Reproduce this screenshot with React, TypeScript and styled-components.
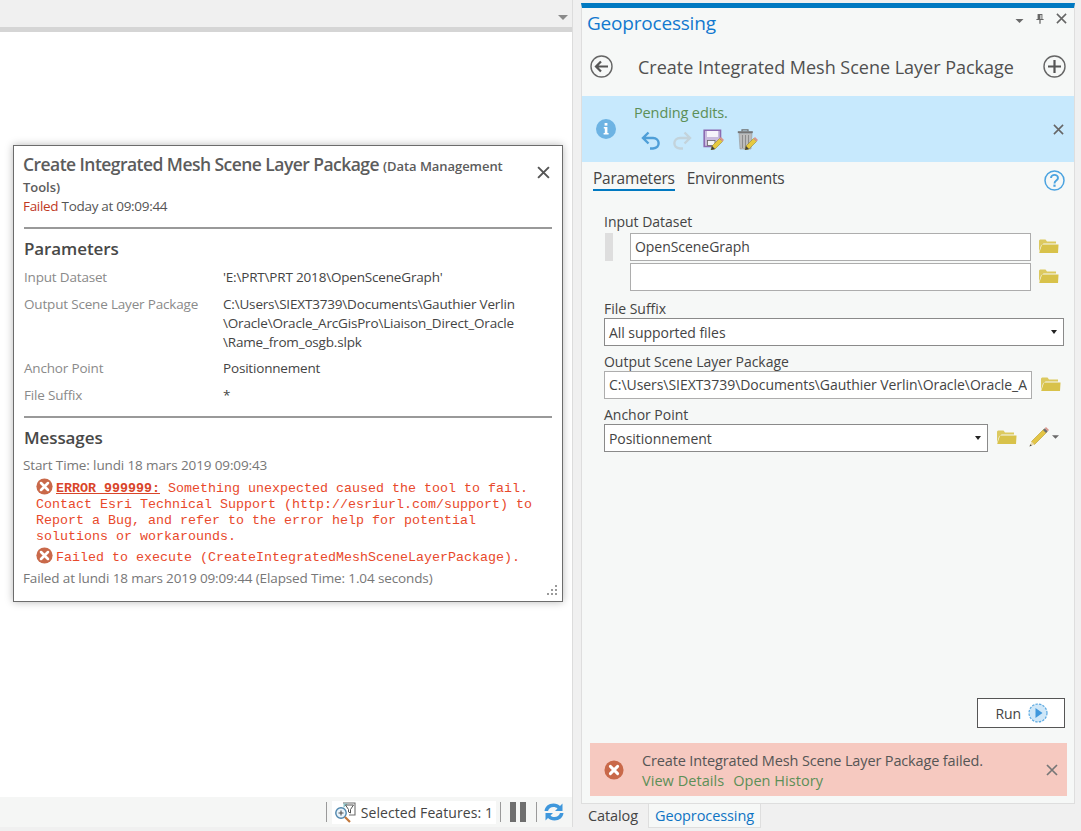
import * as React from 'react';
import styled, { createGlobalStyle } from 'styled-components';

const GlobalStyle = createGlobalStyle`
  html, body {
    margin: 0;
    padding: 0;
    background: #f0f0f0;
    overflow: hidden;
  }
  * {
    box-sizing: border-box;
  }
  body {
    font-family: "Open Sans", "Noto Sans", sans-serif;
    font-size: 13.5px;
    color: #444;
  }
`;

const Page = styled.div`
  display: flex;
  width: 1081px;
  height: 831px;
  background: #f0f0f0;
`;

/* left side: map view with the floating message window */
const MapColumn = styled.div`
  display: flex;
  flex-direction: column;
  width: 573px;
  height: 827px;
  border-right: 1px solid #dcdcdc;
`;

const MapTopBand = styled.div`
  display: flex;
  justify-content: flex-end;
  align-items: center;
  height: 27px;
  padding: 7px 4px 0 0;
`;

const MapView = styled.div`
  flex: 1;
  background: #fff;
  border-top: 5px solid #d5d5d5;
  padding: 113px 0 0 13px;
`;

const StatusBar = styled.div`
  display: flex;
  justify-content: flex-end;
  align-items: center;
  height: 30px;
  padding-right: 8px;
  background: #f5f6f5;
`;

const StatusSeparator = styled.div<{ $left: number; $right: number }>`
  width: 1px;
  height: 20px;
  background: #9a9a9a;
  margin: 0 ${(p) => p.$right}px 0 ${(p) => p.$left}px;
`;

const StatusChip = styled.div`
  display: flex;
  align-items: center;
  gap: 5px;
  height: 23px;
  padding: 0 3px;
  background: #fff;
  font-size: 14px;
  letter-spacing: 0.08px;
  color: #444;
`;

const PauseBar = styled.div`
  width: 6px;
  height: 20px;
  background: #6e6e6e;
  margin-right: 4px;
`;

const MessageWindow = styled.div`
  position: relative;
  width: 550px;
  height: 457px;
  padding: 8px 10px 0 9px;
  background: #fff;
  border: 1.5px solid #6c6c6c;
  box-shadow: 0 0 8px rgba(0, 0, 0, 0.28);
`;

const WindowClose = styled.div`
  position: absolute;
  top: 20px;
  right: 12px;
  display: flex;
`;

const ToolTitle = styled.div`
  width: 500px;
  font-size: 17.5px;
  font-weight: 600;
  line-height: 21px;
  letter-spacing: -0.55px;
  color: #5c5c5c;
`;

const ToolBox = styled.span`
  font-size: 13px;
  line-height: 1;
  letter-spacing: -0.05px;
`;

const StatusLine = styled.div`
  margin-top: 1px;
  font-size: 13.5px;
  line-height: 18px;
  letter-spacing: -0.3px;
  color: #555;
`;

const FailedWord = styled.span`
  color: #c0391f;
`;

const Rule = styled.div<{ $top: number }>`
  height: 2px;
  margin: ${(p) => p.$top}px 0 0 1px;
  background: #999;
`;

const SectionTitle = styled.div`
  margin: 9px 0 0 1px;
  font-size: 17px;
  font-weight: 600;
  line-height: 22px;
  letter-spacing: -0.1px;
  color: #484848;
`;

const ParamGrid = styled.div`
  display: grid;
  grid-template-columns: 199px 1fr;
  row-gap: 7.5px;
  margin: 8px 0 0 1px;
  font-size: 13.5px;
  line-height: 19px;
  letter-spacing: -0.18px;
`;

const ParamName = styled.div`
  color: #8a8a8a;
`;

const ParamValue = styled.div`
  color: #444;
`;

const LogLine = styled.div<{ $top?: number }>`
  margin-top: ${(p) => p.$top ?? 0}px;
  font-size: 13.5px;
  line-height: 18px;
  letter-spacing: -0.12px;
  color: #777;
`;

const ErrorBlock = styled.div<{ $top: number }>`
  margin: ${(p) => p.$top}px 0 0 13px;
  font-family: "Liberation Mono", "DejaVu Sans Mono", monospace;
  font-size: 13.33px;
  line-height: 16px;
  color: #e8492b;
  white-space: nowrap;
`;

const ErrorCode = styled.span`
  font-weight: 700;
  text-decoration: underline;
  color: #d9452a;
`;

const ErrorGlyph = styled.svg`
  display: inline-block;
  width: 17px;
  height: 17px;
  margin-right: 3px;
  vertical-align: -3px;
`;

const ResizeGrip = styled.div`
  position: absolute;
  right: 3px;
  bottom: 3px;
  display: flex;
`;

/* right side: docked geoprocessing pane */
const DockColumn = styled.div`
  display: flex;
  flex-direction: column;
  width: 494px;
  height: 828px;
  margin-left: 8px;
  padding-top: 3px;
`;

const Pane = styled.div`
  display: flex;
  flex-direction: column;
  flex: 1;
  background: #f6f8f7;
  border: 1px solid #dedede;
  border-top: 5px solid #0079c1;
`;

const PaneHead = styled.div`
  display: flex;
  align-items: flex-start;
  justify-content: space-between;
  height: 31px;
  padding: 3px 7px 0 5px;
`;

const PaneTitle = styled.div`
  font-size: 19px;
  line-height: 25px;
  letter-spacing: -0.2px;
  color: #1279cf;
`;

const PaneControls = styled.div`
  display: flex;
  align-items: flex-start;
  gap: 12px;
  padding-top: 2px;
`;

const ControlCaret = styled.div`
  display: flex;
  margin-top: 6px;
`;

const ToolHead = styled.div`
  display: flex;
  align-items: center;
  justify-content: space-between;
  height: 57px;
  padding: 0 8px 2px 8px;
`;

const ToolHeadTitle = styled.div`
  margin-right: 4px;
  font-size: 18px;
  letter-spacing: -0.01px;
  color: #505050;
`;

const PendingBar = styled.div`
  display: flex;
  align-items: center;
  height: 66px;
  padding: 0 10px 0 14px;
  background: #c7e9fd;
`;

const PendingBody = styled.div`
  display: flex;
  flex: 1;
  flex-direction: column;
  align-self: flex-start;
  margin-left: 18px;
  padding-top: 7px;
`;

const GreenText = styled.div`
  font-size: 14.5px;
  line-height: 20px;
  letter-spacing: -0.12px;
  color: #5c8f57;
`;

const PendingTools = styled.div`
  display: flex;
  align-items: center;
  margin: 6px 0 0 7px;
`;

const PendingTool = styled.div<{ $gap: number }>`
  display: flex;
  margin-right: ${(p) => p.$gap}px;
`;

const TabRow = styled.div`
  display: flex;
  align-items: flex-start;
  height: 36px;
  padding: 6px 9px 0 11px;
`;

const Tab = styled.div<{ $active?: boolean }>`
  height: 23px;
  margin-right: 12px;
  font-size: 15.5px;
  line-height: 20px;
  letter-spacing: -0.22px;
  color: #444;
  border-bottom: 2px solid ${(p) => (p.$active ? '#0079c1' : 'transparent')};
`;

const TabHelp = styled.div`
  display: flex;
  margin: 2px 0 0 auto;
`;

const Form = styled.div`
  display: flex;
  flex: 1;
  flex-direction: column;
  padding: 15px 9px 0 22px;
`;

const FieldLabel = styled.div`
  height: 18px;
  font-size: 14px;
  line-height: 18px;
  letter-spacing: -0.02px;
  color: #444;
`;

const FieldGroup = styled.div<{ $bottom?: number }>`
  margin-bottom: ${(p) => p.$bottom ?? 7}px;
`;

const FieldRow = styled.div<{ $top?: number }>`
  display: flex;
  align-items: center;
  margin-top: ${(p) => p.$top ?? 0}px;
`;

const RowHandle = styled.div<{ $visible?: boolean }>`
  width: 8px;
  height: 28px;
  margin: 0 17px 0 1px;
  background: ${(p) => (p.$visible ? '#dedede' : 'transparent')};
`;

const TextBox = styled.div<{ $dark?: boolean; $width: number }>`
  display: flex;
  align-items: center;
  width: ${(p) => p.$width}px;
  height: 28px;
  padding: 0 4px ${(p) => (p.$dark ? 0 : 1)}px;
  overflow: hidden;
  background: #fff;
  border: 1px solid ${(p) => (p.$dark ? '#8a8a8a' : '#adadad')};
  font-size: 14px;
  letter-spacing: -0.05px;
  color: #444;
  white-space: nowrap;
`;

const ClippedValue = styled.span`
  display: block;
  overflow: hidden;
`;

const Caret = styled.div`
  margin-left: auto;
  margin-right: 2px;
  width: 0;
  height: 0;
  border-left: 3.5px solid transparent;
  border-right: 3.5px solid transparent;
  border-top: 4px solid #222;
`;

const FolderSlot = styled.div<{ $left: number }>`
  display: flex;
  margin-left: ${(p) => p.$left}px;
  padding-bottom: 2px;
`;

const RunRow = styled.div`
  display: flex;
  justify-content: flex-end;
  margin-top: auto;
  padding-bottom: 15px;
`;

const RunButton = styled.div`
  display: flex;
  align-items: center;
  justify-content: flex-end;
  gap: 7px;
  width: 88px;
  height: 30px;
  padding-right: 16px;
  background: #fff;
  border: 1px solid #555;
  font-size: 14px;
  letter-spacing: -0.1px;
  color: #444;
`;

const FailBanner = styled.div`
  display: flex;
  align-items: center;
  height: 53px;
  margin: 0 7px 7px 8px;
  padding: 0 9px 0 14px;
  background: #f6c9c0;
`;

const FailBody = styled.div`
  flex: 1;
  margin-left: 18px;
  padding-top: 2px;
  font-size: 14.5px;
  line-height: 20px;
  letter-spacing: -0.14px;
  color: #555;
`;

const FailLinks = styled.div`
  display: flex;
  gap: 9px;
  letter-spacing: 0.05px;
  color: #5c8f57;
`;

const DockTabs = styled.div`
  display: flex;
  height: 24px;
`;

const DockTab = styled.div<{ $active?: boolean }>`
  height: 24px;
  margin-left: ${(p) => (p.$active ? 3 : 0)}px;
  padding: 1px 6px 0;
  font-size: 14.5px;
  line-height: 21px;
  letter-spacing: -0.1px;
  color: ${(p) => (p.$active ? '#0f74c4' : '#444')};
  background: ${(p) => (p.$active ? '#f6f8f7' : 'transparent')};
  border: 1px solid ${(p) => (p.$active ? '#dedede' : 'transparent')};
  border-top: 0;
`;

const CloseIcon = ({ size = 12, color = '#666', width = 1.7 }: { size?: number; color?: string; width?: number }) => (
  <svg width={size} height={size} viewBox="0 0 12 12">
    <path d="M1 1L11 11M11 1L1 11" stroke={color} strokeWidth={width} fill="none" />
  </svg>
);

const ErrorDisc = ({ size = 22 }: { size?: number }) => (
  <svg width={size} height={size} viewBox="0 0 22 22">
    <circle cx="11" cy="11" r="10.5" fill="#c9694a" />
    <path d="M7 7L15 15M15 7L7 15" stroke="#fff" strokeWidth="3.2" strokeLinecap="round" />
  </svg>
);

const ErrorInline = () => (
  <ErrorGlyph viewBox="0 0 22 22">
    <circle cx="11" cy="11" r="10.5" fill="#c9694a" />
    <path d="M6.5 6.5L15.5 15.5M15.5 6.5L6.5 15.5" stroke="#fff" strokeWidth="3.4" strokeLinecap="round" />
  </ErrorGlyph>
);

const Folder = () => (
  <svg width="21" height="16" viewBox="0 0 21 16">
    <path d="M1 14V2.5L2 1.5H7.5L9 3.5H18V5.5H5.5L3 7.5Z" fill="#dcc95f" />
    <path d="M4 6.5H20.5L20 15H1.2Z" fill="#d8c24a" />
  </svg>
);

const Pencil = () => (
  <svg width="22" height="22" viewBox="0 0 22 22">
    <path d="M3.5 15.5L15.5 3.5L18.5 6.5L6.5 18.5Z" fill="#e3c545" stroke="#b79c2a" strokeWidth="0.6" />
    <path d="M15 4L16.8 2.2L19.8 5.2L18 7Z" fill="#6f6f6f" />
    <path d="M16.8 2.2L18 1L21 4L19.8 5.2Z" fill="#d9968c" />
    <path d="M3.5 15.5L6.5 18.5L1.5 20.5Z" fill="#ecdcae" />
    <path d="M2.4 18.2L3.8 19.6L1.5 20.5Z" fill="#444" />
  </svg>
);

const CircleArrow = ({ kind }: { kind: 'back' | 'add' }) => (
  <svg width="23" height="23" viewBox="0 0 23 23">
    <circle cx="11.5" cy="11.5" r="10.5" fill="none" stroke="#666" strokeWidth="1.4" />
    {kind === 'back' ? (
      <path d="M18 11.5H6M11 6.5L6 11.5L11 16.5" fill="none" stroke="#555" strokeWidth="2.2" />
    ) : (
      <path d="M5 11.5H18M11.5 5V18" fill="none" stroke="#555" strokeWidth="2.2" />
    )}
  </svg>
);

const InfoDisc = () => (
  <svg width="20" height="20" viewBox="0 0 20 20">
    <circle cx="10" cy="10" r="10" fill="#6db3e3" />
    <rect x="8.6" y="4" width="2.8" height="2.6" fill="#fff" />
    <path d="M7.8 8H11.4V14H12.6V15.6H7.6V14H8.8V9.6H7.8Z" fill="#fff" />
  </svg>
);

const Turn = ({ color, flip }: { color: string; flip?: boolean }) => (
  <svg width="20" height="20" viewBox="0 0 20 20" style={flip ? { transform: 'scaleX(-1)' } : undefined}>
    <path d="M7.5 2.5L2 8L7.5 13.5M2 8H12C19 8 20 18 12 18.5H9" fill="none" stroke={color} strokeWidth="2.4" />
  </svg>
);

const PencilOverlay = () => (
  <g>
    <path d="M9 17L16.5 9.5L19.5 12.5L12 20L8 21Z" fill="#e6c93f" stroke="#8a7a2a" strokeWidth="0.5" />
    <path d="M16.5 9.5L18 8L21 11L19.5 12.5Z" fill="#d9968c" />
    <path d="M9 17L12 20L8 21Z" fill="#3f3f3f" />
  </g>
);

const SaveEdits = () => (
  <svg width="21" height="21" viewBox="0 0 21 21">
    <path d="M1.2 1.2H17.5V11L11 17.5H1.2Z" fill="#c9bbdd" stroke="#8c6bb1" strokeWidth="1.6" />
    <rect x="4" y="2" width="11" height="6" fill="#f6f3fa" />
    <rect x="4.5" y="11.5" width="7.5" height="5" fill="#f4f4f4" stroke="#666" strokeWidth="0.8" />
    <PencilOverlay />
  </svg>
);

const TrashEdits = () => (
  <svg width="21" height="21" viewBox="0 0 21 21">
    <path d="M5 2.2V0.8H11V2.2" fill="none" stroke="#6f6f6f" strokeWidth="1.2" />
    <rect x="0.8" y="2.2" width="15" height="2" fill="#757575" />
    <path d="M2 4.5H15L14 20H3Z" fill="#bcbcbc" stroke="#8a8a8a" strokeWidth="0.5" />
    <path d="M5.5 6V19M8.5 6V19M11.5 6V19" stroke="#8d8d8d" strokeWidth="1" />
    <PencilOverlay />
  </svg>
);

const SelectFeatures = () => (
  <svg width="21" height="21" viewBox="0 0 21 21">
    <path d="M8 1H20V13H14" fill="#fff" stroke="#6d6d6d" strokeWidth="1.1" />
    <path d="M8.5 1.5H13L8.5 6Z" fill="#8cc4c8" />
    <path d="M10.5 3H18.5L15.5 7.5V11L13.5 10V7.5Z" fill="#fff" stroke="#555" strokeWidth="1" />
    <circle cx="6" cy="11" r="5.2" fill="#eaf4fb" stroke="#4f86ad" strokeWidth="1.4" />
    <path d="M3.5 11H8.5M6 8.5V13.5" stroke="#4e4e4e" strokeWidth="1.1" />
    <path d="M10 15L15 20" stroke="#c2773a" strokeWidth="2.2" />
  </svg>
);

const Refresh = () => (
  <svg width="20" height="20" viewBox="0 0 20 20">
    <path d="M0.5 9C1 4.5 4.5 1.5 9.5 1.5C12.5 1.5 14.5 2.5 16 4L18.5 1.5V9H11L13.5 6.5C12.5 5.5 11 5 9.5 5C6.8 5 4.8 6.5 4 9Z" fill="#3f97dc" />
    <path d="M19.5 11C19 15.5 15.5 18.5 10.5 18.5C7.5 18.5 5.5 17.5 4 16L1.5 18.5V11H9L6.5 13.5C7.5 14.5 9 15 10.5 15C13.2 15 15.2 13.5 16 11Z" fill="#3f97dc" />
  </svg>
);

const Help = () => (
  <svg width="21" height="21" viewBox="0 0 21 21">
    <circle cx="10.5" cy="10.5" r="9.5" fill="none" stroke="#4ba3e0" strokeWidth="1.5" />
    <path d="M7 8C7 3.8 14 3.8 14 8C14 10.6 10.5 10.6 10.5 13.4" fill="none" stroke="#4ba3e0" strokeWidth="1.9" />
    <rect x="9.4" y="14.6" width="2.2" height="2.2" fill="#4ba3e0" />
  </svg>
);

const RunDisc = () => (
  <svg width="20" height="20" viewBox="0 0 20 20">
    <circle cx="10" cy="10" r="9" fill="#cfe7f8" stroke="#5aa8e0" strokeWidth="1.2" strokeDasharray="2.4 1.2" />
    <path d="M7.5 5L14.5 10L7.5 15Z" fill="#3f97dc" />
  </svg>
);

const Pin = () => (
  <svg width="8" height="11" viewBox="0 0 10 13">
    <path d="M2 1H8V7H9.5V8.5H5.8V13H4.2V8.5H0.5V7H2ZM5.5 2V7H6.8V2Z" fill="#666" fillRule="evenodd" />
  </svg>
);

const Down = ({ color = '#6a6a6a', w = 12, h = 6 }: { color?: string; w?: number; h?: number }) => (
  <svg width={w} height={h} viewBox="0 0 12 6">
    <path d="M0 0H12L6 6Z" fill={color} />
  </svg>
);

const Grip = () => (
  <svg width="14" height="14" viewBox="0 0 14 14" fill="#9a9a9a">
    <rect x="10" y="1" width="2" height="2" />
    <rect x="6" y="5" width="2" height="2" />
    <rect x="10" y="5" width="2" height="2" />
    <rect x="2" y="9" width="2" height="2" />
    <rect x="6" y="9" width="2" height="2" />
    <rect x="10" y="9" width="2" height="2" />
  </svg>
);

export default function App() {
  return (
    <Page>
      <GlobalStyle />
      <MapColumn>
        <MapTopBand>
          <Down color="#8a8a8a" w={10} h={5} />
        </MapTopBand>
        <MapView>
          <MessageWindow>
            <WindowClose>
              <CloseIcon size={13} color="#555" width={1.8} />
            </WindowClose>
            <ToolTitle>
              Create Integrated Mesh Scene Layer Package <ToolBox>(Data Management Tools)</ToolBox>
            </ToolTitle>
            <StatusLine>
              <FailedWord>Failed</FailedWord> Today at 09:09:44
            </StatusLine>
            <Rule $top={12} />
            <SectionTitle>Parameters</SectionTitle>
            <ParamGrid>
              <ParamName>Input Dataset</ParamName>
              <ParamValue>'E:\PRT\PRT 2018\OpenSceneGraph'</ParamValue>
              <ParamName>Output Scene Layer Package</ParamName>
              <ParamValue>
                C:\Users\SIEXT3739\Documents\Gauthier Verlin
                <br />
                \Oracle\Oracle_ArcGisPro\Liaison_Direct_Oracle
                <br />
                \Rame_from_osgb.slpk
              </ParamValue>
              <ParamName>Anchor Point</ParamName>
              <ParamValue>Positionnement</ParamValue>
              <ParamName>File Suffix</ParamName>
              <ParamValue>*</ParamValue>
            </ParamGrid>
            <Rule $top={11} />
            <SectionTitle>Messages</SectionTitle>
            <LogLine $top={7}>Start Time: lundi 18 mars 2019 09:09:43</LogLine>
            <ErrorBlock $top={4}>
              <ErrorInline />
              <ErrorCode>ERROR 999999:</ErrorCode> Something unexpected caused the tool to fail.
              <br />
              Contact Esri Technical Support (http://esriurl.com/support) to
              <br />
              Report a Bug, and refer to the error help for potential
              <br />
              solutions or workarounds.
            </ErrorBlock>
            <ErrorBlock $top={2}>
              <ErrorInline />
              Failed to execute (CreateIntegratedMeshSceneLayerPackage).
            </ErrorBlock>
            <LogLine $top={3}>Failed at lundi 18 mars 2019 09:09:44 (Elapsed Time: 1.04 seconds)</LogLine>
            <ResizeGrip>
              <Grip />
            </ResizeGrip>
          </MessageWindow>
        </MapView>
        <StatusBar>
          <StatusSeparator $left={0} $right={5} />
          <StatusChip>
            <SelectFeatures />
            Selected Features: 1
          </StatusChip>
          <StatusSeparator $left={4} $right={9} />
          <PauseBar />
          <PauseBar />
          <StatusSeparator $left={6} $right={7} />
          <Refresh />
        </StatusBar>
      </MapColumn>
      <DockColumn>
        <Pane>
          <PaneHead>
            <PaneTitle>Geoprocessing</PaneTitle>
            <PaneControls>
              <ControlCaret>
                <Down w={9} h={4} />
              </ControlCaret>
              <Pin />
              <CloseIcon size={11} />
            </PaneControls>
          </PaneHead>
          <ToolHead>
            <CircleArrow kind="back" />
            <ToolHeadTitle>Create Integrated Mesh Scene Layer Package</ToolHeadTitle>
            <CircleArrow kind="add" />
          </ToolHead>
          <PendingBar>
            <InfoDisc />
            <PendingBody>
              <GreenText>Pending edits.</GreenText>
              <PendingTools>
                <PendingTool $gap={11}>
                  <Turn color="#4f9fd8" />
                </PendingTool>
                <PendingTool $gap={11}>
                  <Turn color="#c3d3db" flip />
                </PendingTool>
                <PendingTool $gap={13}>
                  <SaveEdits />
                </PendingTool>
                <PendingTool $gap={0}>
                  <TrashEdits />
                </PendingTool>
              </PendingTools>
            </PendingBody>
            <CloseIcon size={11} />
          </PendingBar>
          <TabRow>
            <Tab $active>Parameters</Tab>
            <Tab>Environments</Tab>
            <TabHelp>
              <Help />
            </TabHelp>
          </TabRow>
          <Form>
            <FieldGroup $bottom={9}>
              <FieldLabel>Input Dataset</FieldLabel>
              <FieldRow $top={2}>
                <RowHandle $visible />
                <TextBox $width={401}>OpenSceneGraph</TextBox>
                <FolderSlot $left={7}>
                  <Folder />
                </FolderSlot>
              </FieldRow>
              <FieldRow $top={2}>
                <RowHandle />
                <TextBox $width={401} />
                <FolderSlot $left={7}>
                  <Folder />
                </FolderSlot>
              </FieldRow>
            </FieldGroup>
            <FieldGroup>
              <FieldLabel>File Suffix</FieldLabel>
              <TextBox $dark $width={460}>
                All supported files
                <Caret />
              </TextBox>
            </FieldGroup>
            <FieldGroup>
              <FieldLabel>Output Scene Layer Package</FieldLabel>
              <FieldRow>
                <TextBox $width={428}>
                  <ClippedValue>C:\Users\SIEXT3739\Documents\Gauthier Verlin\Oracle\Oracle_ArcGisPro\Liaison</ClippedValue>
                </TextBox>
                <FolderSlot $left={8}>
                  <Folder />
                </FolderSlot>
              </FieldRow>
            </FieldGroup>
            <FieldGroup>
              <FieldLabel>Anchor Point</FieldLabel>
              <FieldRow>
                <TextBox $dark $width={384}>
                  Positionnement
                  <Caret />
                </TextBox>
                <FolderSlot $left={8}>
                  <Folder />
                </FolderSlot>
                <FolderSlot $left={11}>
                  <Pencil />
                </FolderSlot>
                <FolderSlot $left={2}>
                  <Down w={7} h={4} />
                </FolderSlot>
              </FieldRow>
            </FieldGroup>
            <RunRow>
              <RunButton>
                Run
                <RunDisc />
              </RunButton>
            </RunRow>
          </Form>
          <FailBanner>
            <ErrorDisc size={20} />
            <FailBody>
              Create Integrated Mesh Scene Layer Package failed.
              <FailLinks>
                <span>View Details</span>
                <span>Open History</span>
              </FailLinks>
            </FailBody>
            <CloseIcon size={12} color="#777" />
          </FailBanner>
        </Pane>
        <DockTabs>
          <DockTab>Catalog</DockTab>
          <DockTab $active>Geoprocessing</DockTab>
        </DockTabs>
      </DockColumn>
    </Page>
  );
}
